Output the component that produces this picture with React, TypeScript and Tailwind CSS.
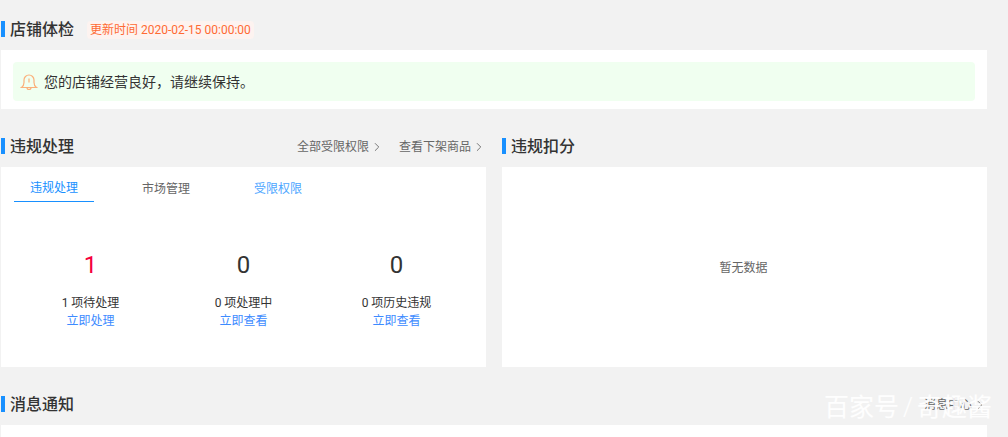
import { ChevronRight } from 'lucide-react'

const font = { fontFamily: 'Roboto, "Noto Sans CJK SC", sans-serif' }

function SectionTitle({ title }: { title: string }) {
  return (
    <div className="flex items-start gap-[5px]">
      <span className="h-4 w-1 bg-[#1890ff]" />
      <h2 className="text-base leading-[18px] font-medium text-[#333]">{title}</h2>
    </div>
  )
}

function HeaderLink({ label }: { label: string }) {
  return (
    <a className="mt-px flex items-center gap-px text-xs leading-4 text-[#666]">
      {label}
      <ChevronRight size={14} strokeWidth={1.5} />
    </a>
  )
}

const stats = [
  { value: '1', label: '1 项待处理', action: '立即处理', red: true },
  { value: '0', label: '0 项处理中', action: '立即查看', red: false },
  { value: '0', label: '0 项历史违规', action: '立即查看', red: false },
]

function BellIcon() {
  return (
    <svg width="18" height="18" viewBox="0 0 18 18" fill="none" stroke="#fbb07a" strokeWidth="1.2">
      <path d="M1.500 14.500c1.500-1 2.500-2.500 2.500-5V7a5 5 0 0 1 10 0v2.500c0 2.500 1 4 2.500 5z" />
      <path d="M7 14.500a2 2 0 0 0 4 0" />
      <path d="M9 5.500v4" />
    </svg>
  )
}

export default function App() {
  return (
    <div style={font} className="relative h-[437px] w-[1008px] overflow-hidden bg-[#f2f2f2] pl-px">
      <div className="w-[986px]">
        <div className="flex h-[50px] items-start pt-[21px]">
          <SectionTitle title="店铺体检" />
          <span className="ml-[13px] h-[18px] rounded-sm bg-[#fdf3f0] px-[3px] text-xs leading-[18px] text-[#ff6a33]">
            更新时间 2020-02-15 00:00:00
          </span>
        </div>
        <div className="bg-white px-3 pt-3 pb-2">
          <div className="flex h-[39px] items-center gap-[6px] rounded bg-[#f0fff0] pl-[7px]">
            <BellIcon />
            <span className="text-sm text-[#333]">您的店铺经营良好，请继续保持。</span>
          </div>
        </div>

        <div className="mt-[29px] grid grid-cols-2 gap-4">
          <div>
            <div className="flex h-[29px] items-start justify-between">
              <SectionTitle title="违规处理" />
              <div className="flex gap-[15px]">
                <HeaderLink label="全部受限权限" />
                <HeaderLink label="查看下架商品" />
              </div>
            </div>
            <div className="h-[200px] bg-white px-[13px]">
              <div className="flex gap-8 text-xs">
                <div className="flex h-[35px] w-20 items-center justify-center border-b border-[#1890ff] pt-2 text-[#1890ff]">
                  违规处理
                </div>
                <div className="flex h-[35px] w-20 items-center justify-center pt-2 text-[#666]">市场管理</div>
                <div className="flex h-[35px] w-20 items-center justify-center pt-2 text-[#4da6ff]">受限权限</div>
              </div>
              <div className="mt-[47px] grid w-[459px] grid-cols-3">
                {stats.map((stat, i) => (
                  <div key={i} className="flex flex-col items-center">
                    <div className={`text-2xl leading-8 ${stat.red ? 'text-[#f5003d]' : 'text-[#333]'}`}>
                      {stat.value}
                    </div>
                    <div className="mt-[13px] text-xs leading-[18px] text-[#333]">{stat.label}</div>
                    <a className="text-xs leading-[18px] text-[#3d8bff]">{stat.action}</a>
                  </div>
                ))}
              </div>
            </div>
          </div>
          <div>
            <div className="flex h-[29px] items-start">
              <SectionTitle title="违规扣分" />
            </div>
            <div className="flex h-[200px] items-center justify-center bg-white pt-[2px] pr-[2px] text-xs text-[#666]">
              暂无数据
            </div>
          </div>
        </div>

        <div className="mt-[29px] flex h-[29px] items-start justify-between">
          <SectionTitle title="消息通知" />
          <HeaderLink label="消息中心" />
        </div>
        <div className="h-3 bg-white" />
      </div>

      <div className="absolute top-[392px] left-[824px] flex text-[25px] leading-8 whitespace-nowrap text-white/90">
        百家号<span className="mx-1 font-light">/</span>奇趣酱
      </div>
    </div>
  )
}
